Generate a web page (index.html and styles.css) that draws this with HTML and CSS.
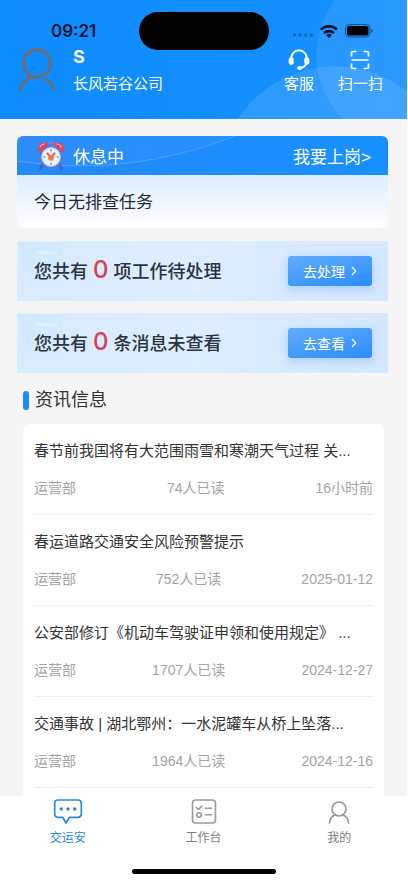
FILE: index.html
```html
<!DOCTYPE html>
<html lang="zh-CN">
<head>
<meta charset="utf-8">
<meta name="viewport" content="width=device-width, initial-scale=1">
<title>交运安</title>
<link rel="stylesheet" href="styles.css">
</head>
<body>
<div class="app">
  <header class="hero">
    <div class="status">
      <span class="clock">09:21</span>
      <span class="island"></span>
      <span class="signals">
        <svg width="20" height="4" viewBox="0 0 20 4" fill="#0a66c2"><rect y="0.5" width="3" height="3" rx="1"/><rect x="5.6" y="0.5" width="3" height="3" rx="1"/><rect x="11.2" y="0.5" width="3" height="3" rx="1"/><rect x="16.8" y="0.5" width="3" height="3" rx="1"/></svg>
        <svg class="wifi" width="18" height="13" viewBox="0 0 18 13" fill="none" stroke="#00122b" stroke-width="2.6"><path d="M1 4.6a11.4 11.4 0 0 1 16 0"/><path d="M4 8.100a7.2 7.2 0 0 1 10 0"/><path d="M9 13 6.2 10.200a4 4 0 0 1 5.6 0z" fill="#00122b" stroke="none"/></svg>
        <svg width="28" height="14" viewBox="0 0 28 14"><rect x="0.5" y="0.5" width="24.5" height="12.5" rx="4" fill="none" stroke="#0b4d94"/><rect x="2" y="2" width="21.5" height="9.5" rx="2.6" fill="#000"/><path d="M26.3 4.6v4.4q1.4-.7 1.4-2.2t-1.4-2.2z" fill="#0b4d94"/></svg>
      </span>
    </div>
    <div class="profile">
      <svg class="avatar" width="38" height="44" viewBox="0 0 38 44" fill="none" stroke="#666f7a" stroke-width="3.2" stroke-linecap="round"><circle cx="19" cy="15.5" r="13.6"/><path d="M2.2 41C4.500 33 10 29 17 29M28.500 31.500Q33.500 35 35.500 41"/></svg>
      <div class="who">
        <strong class="name">S</strong>
        <span class="company">长风若谷公司</span>
      </div>
      <a class="action" href="#service">
        <svg width="22" height="22" viewBox="0 0 22 22" fill="none" stroke="#fff" stroke-width="1.9"><path d="M3.300 10.500V9a7.700 7.700 0 0 1 15.400 0v1.500M18.500 14q-1 4-6 5"/><rect x="1.200" y="8.500" width="4" height="7" rx="2" fill="#fff" stroke-width="1"/><rect x="16.800" y="8.500" width="4" height="7" rx="2" fill="#fff" stroke-width="1"/><ellipse cx="11.500" cy="19" rx="2.500" ry="2" fill="#fff" stroke="none"/></svg>
        <span>客服</span>
      </a>
      <a class="action" href="#scan">
        <svg width="22" height="22" viewBox="0 0 22 22" fill="none" stroke="#fff" stroke-width="1.700"><path d="M2.500 7.500V4Q2.500 2.500 4 2.500H7.500M14.500 2.500H18Q19.500 2.500 19.500 4V7.500M19.500 14.500V18Q19.500 19.500 18 19.500H14.500M7.500 19.500H4Q2.500 19.500 2.500 18V14.500M2.500 11H19.500"/></svg>
        <span>扫一扫</span>
      </a>
    </div>
  </header>

  <main class="content">
    <section class="duty">
      <div class="duty-head">
        <svg class="duty-wave" viewBox="0 0 371 39" preserveAspectRatio="none"><path d="M0 25Q100 42 215 0H0z" fill="#fff" opacity=".04"/><path d="M0 25Q110 42 218 0" fill="none" stroke="#fff" opacity=".2"/></svg>
        <svg class="alarm" width="28" height="30" viewBox="0 0 28 30">
          <path d="M6 23 3.500 27.500M22 23l2.500 4.500" stroke="#4264c4" stroke-width="3" stroke-linecap="round"/>
          <path d="M8 5Q14-2 20 5" fill="none" stroke="#6b87da" stroke-width="1.600"/>
          <path d="M1 10Q0 3 6 1.500 10 .8 11.500 4L3 11.500Q1.500 11.500 1 10z" fill="#e9415c"/>
          <path d="M27 10Q28 3 22 1.500 18 .8 16.500 4L25 11.500Q26.500 11.500 27 10z" fill="#e9415c"/>
          <path d="M3 6q1-2.500 4-3M20 3q3 .5 4 3" fill="none" stroke="#ff9cab" stroke-width="1.300" stroke-linecap="round"/>
          <circle cx="14" cy="16.500" r="11.500" fill="#5478da"/>
          <circle cx="14" cy="16" r="9.500" fill="#ecf3ff" stroke="#a4bbf5"/>
          <path d="M14 8v2.500M14 21.500V24M6 16h2.500M19.500 16H22" stroke="#6d84c3" stroke-width="1.200"/>
          <path d="m10.500 12.500 3.500 4 3.500-4" fill="none" stroke="#e9653f" stroke-width="2.200" stroke-linecap="round"/><circle cx="14" cy="17" r="2.800" fill="#f0763f"/>
        </svg>
        <span class="duty-state">休息中</span>
        <a class="duty-link" href="#start">我要上岗&gt;</a>
      </div>
      <p class="duty-note">今日无排查任务</p>
    </section>

    <section class="notice">
      <p class="notice-text">您共有 <b class="count">0</b> 项工作待处理</p>
      <button class="go" type="button">去处理<svg width="6" height="10" viewBox="0 0 6 10" fill="none" stroke="#fff" stroke-width="1.200"><path d="m1 1 3.800 4L1 9"/></svg></button>
    </section>
    <section class="notice">
      <p class="notice-text">您共有 <b class="count">0</b> 条消息未查看</p>
      <button class="go" type="button">去查看<svg width="6" height="10" viewBox="0 0 6 10" fill="none" stroke="#fff" stroke-width="1.200"><path d="m1 1 3.800 4L1 9"/></svg></button>
    </section>

    <h2 class="heading">资讯信息</h2>
    <ul class="news">
      <li class="item"><a class="title" href="#n1">春节前我国将有大范围雨雪和寒潮天气过程 关...</a><div class="meta"><span>运营部</span><span>74人已读</span><span>16小时前</span></div></li>
      <li class="item"><a class="title" href="#n2">春运道路交通安全风险预警提示</a><div class="meta"><span>运营部</span><span>752人已读</span><span>2025-01-12</span></div></li>
      <li class="item"><a class="title" href="#n3">公安部修订《机动车驾驶证申领和使用规定》 ...</a><div class="meta"><span>运营部</span><span>1707人已读</span><span>2024-12-27</span></div></li>
      <li class="item"><a class="title" href="#n4">交通事故 | 湖北鄂州：一水泥罐车从桥上坠落...</a><div class="meta"><span>运营部</span><span>1964人已读</span><span>2024-12-16</span></div></li>
    </ul>
  </main>

  <nav class="tabs">
    <a class="tab active" href="#home">
      <svg width="30" height="28" viewBox="0 0 30 28" fill="none" stroke="#2a8be6" stroke-width="1.700" stroke-linejoin="round"><path d="M5 2H25Q28.300 2 28.300 5.300V16Q28.300 19.300 25 19.300H16.500L13 25 9.700 19.300H5Q1.700 19.300 1.700 16V5.300Q1.700 2 5 2z"/><g fill="#2a8be6" stroke="none"><circle cx="8.300" cy="11" r="1.800"/><circle cx="15" cy="11" r="1.800"/><circle cx="21.700" cy="11" r="1.800"/></g></svg>
      <span>交运安</span>
    </a>
    <a class="tab" href="#work">
      <svg width="28" height="28" viewBox="0 0 28 28" fill="none" stroke="#999" stroke-width="1.600" stroke-linecap="round" stroke-linejoin="round"><rect x="2.500" y="2" width="23" height="23" rx="3"/><path d="m6.500 9.500 2 2L12 8M15.500 10.200H21.500M15.500 16.800H21.500"/><circle cx="9" cy="17" r="2.200"/></svg>
      <span>工作台</span>
    </a>
    <a class="tab" href="#me">
      <svg width="28" height="28" viewBox="0 0 28 28" fill="none" stroke="#999" stroke-width="1.700" stroke-linecap="round"><circle cx="14" cy="11" r="7"/><path d="M4.500 25Q5 19 10 17M18 17Q23 19 23.500 25"/></svg>
      <span>我的</span>
    </a>
  </nav>
  <div class="home-bar"></div>
</div>
</body>
</html>
```
FILE: styles.css
```css
* { box-sizing: border-box; }
body {
  margin: 0;
  background: #fff;
  color: #333;
  font-family: "Liberation Sans", "Noto Sans CJK SC", sans-serif;
  font-size: 15px;
}
a { color: inherit; text-decoration: none; }
p, h2, ul { margin: 0; padding: 0; }
svg { display: block; flex: none; }

.app {
  display: flex;
  flex-direction: column;
  height: 100vh;
  padding-right: 1px;
}

.hero {
  flex: none;
  padding-bottom: 24px;
  color: #fff;
  background:
    radial-gradient(circle at calc(100% - 72px) 183px, rgba(255, 255, 255, .11) 116px, transparent 117px),
    radial-gradient(circle at 100% 55px, rgba(255, 255, 255, .08) 90px, transparent 91px),
    linear-gradient(90deg, #0d8cff, #1890ff);
}
.status {
  position: relative;
  display: flex;
  align-items: center;
  justify-content: space-between;
  height: 46px;
  padding: 16px 34px 0 51px;
}
.clock {
  color: #00122b;
  font: 600 17px/30px Inter, sans-serif;
}
.island {
  position: absolute;
  top: 12px;
  left: 50%;
  width: 130px;
  height: 38px;
  border-radius: 19px;
  background: #000;
  transform: translateX(-50%);
}
.signals { display: flex; align-items: center; gap: 7px; }
.signals svg:first-child { margin-top: 8px; }

.profile {
  display: flex;
  align-items: flex-start;
  padding: 0 24px 0 18px;
}
.avatar { margin-top: 2px; }
.who {
  display: flex;
  flex: 1;
  flex-direction: column;
  margin-left: 17px;
}
.name { font: 700 18px/22px Inter, sans-serif; }
.company { margin-top: 5px; line-height: 22px; }
.action {
  display: flex;
  flex-direction: column;
  align-items: center;
  gap: 2px;
  margin: 3px 0 0 24px;
  line-height: 22px;
}

.content {
  flex: 1;
  min-height: 0;
  padding: 17px 19px 0 17px;
  overflow: hidden;
  background: #f5f5f5;
}
.duty {
  overflow: hidden;
  border-radius: 6px 6px 8px 8px;
  background: linear-gradient(#deedff 39px, #fdfeff);
  margin-bottom: 13px;
}
.duty-head {
  position: relative;
  display: flex;
  align-items: center;
  height: 39px;
  padding: 0 17px 0 20px;
  background: linear-gradient(90deg, #2589fa, #1890ff);
  color: #fff;
  font-size: 17px;
}
.duty-wave { position: absolute; inset: 0; width: 100%; height: 100%; }
.alarm, .duty-state, .duty-link { position: relative; }
.duty-state { margin-left: 8px; }
.duty-link { margin-left: auto; }
.duty-note {
  padding: 16px 17px 13px;
  color: #222b35;
  font-size: 17px;
  line-height: 24px;
}

.notice {
  display: flex;
  align-items: center;
  justify-content: space-between;
  height: 60px;
  margin-bottom: 12px;
  padding: 0 16px 0 17px;
  border-radius: 2px;
  background:
    linear-gradient(#dceeff, #dceeff) 18px 10px / 20px 3px no-repeat,
    linear-gradient(#d9ecff, #d9ecff) 18px 17px / 20px 2px no-repeat,
    linear-gradient(#d0e8ff, #d8ebff) 2px 2px / 44px 44px no-repeat,
    linear-gradient(90deg, #d9ebff, #deecff 50%, #d4e7ff);
}
.notice-text {
  color: #2b343e;
  font-size: 18px;
  font-weight: 500;
  line-height: 30px;
}
.count { color: #d8434f; font: 500 24px/30px Inter, sans-serif; }
.go {
  display: flex;
  align-items: center;
  justify-content: center;
  gap: 6px;
  width: 84px;
  height: 30px;
  padding: 0;
  border: 0;
  border-radius: 3px;
  background: linear-gradient(165deg, #62adfc, #2b8dfb);
  box-shadow: 0 3px 10px rgba(60, 140, 250, .3);
  color: #fff;
  font: inherit;
  font-size: 14px;
}

.heading {
  display: flex;
  align-items: center;
  gap: 6px;
  margin: 15px 0 12px 6px;
  font-size: 18px;
  font-weight: 400;
  line-height: 24px;
}
.heading::before {
  width: 6px;
  height: 19px;
  border-radius: 3px;
  background: #1e8cf8;
  content: "";
}
.news {
  height: 100%;
  margin: 0 4px 0 6px;
  padding: 0 11px;
  border-radius: 8px;
  background: #fff;
  list-style: none;
}
.item { padding: 15px 0 16px; border-bottom: 1px solid #efefef; }
.title {
  display: block;
  overflow: hidden;
  line-height: 24px;
  text-overflow: ellipsis;
  white-space: nowrap;
}
.meta {
  display: flex;
  justify-content: space-between;
  margin-top: 15px;
  color: #a3a3a3;
  font-size: 14px;
  line-height: 20px;
}

.tabs { display: flex; flex: none; height: 73px; }
.tab {
  display: flex;
  flex: 1;
  flex-direction: column;
  align-items: center;
  gap: 4px;
  padding-top: 2px;
  color: #7d7d7d;
  font-size: 12px;
  line-height: 16px;
}
.active { color: #2a8be6; }
.home-bar {
  flex: none;
  width: 144px;
  height: 5px;
  margin: 0 auto 9px;
  border-radius: 3px;
  background: #000;
}
```
